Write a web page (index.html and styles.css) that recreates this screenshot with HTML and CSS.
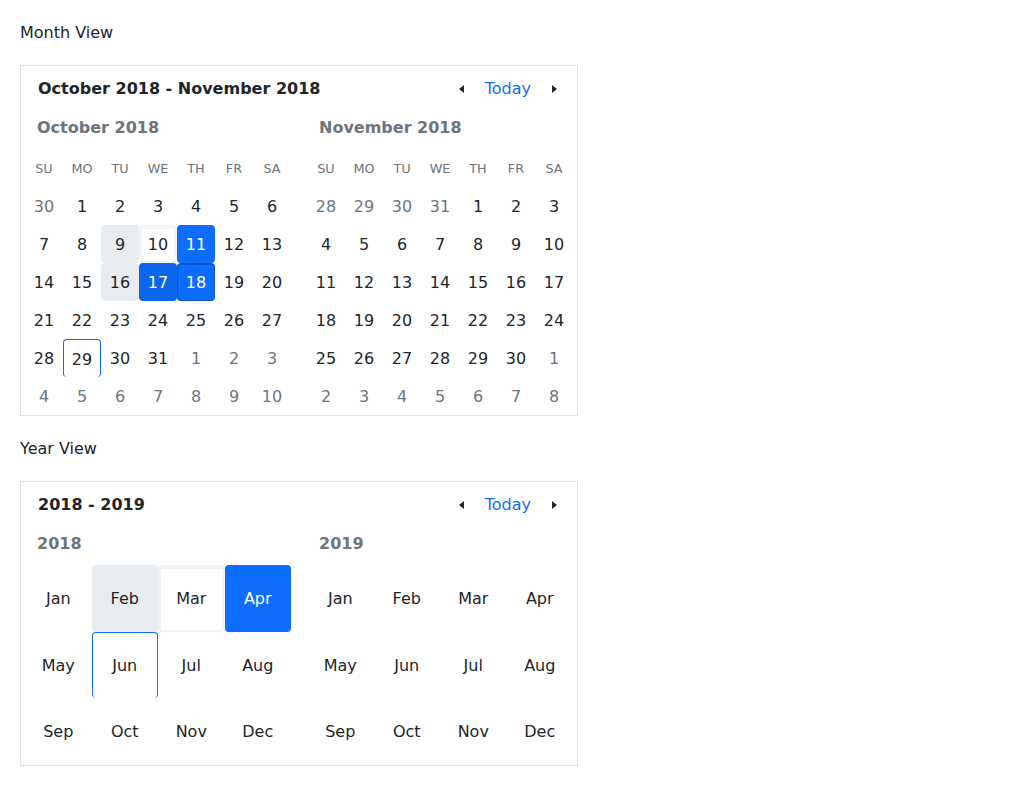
FILE: index.html
```html
<!DOCTYPE html>
<html>
<head>
<meta charset="utf-8">
<link rel="stylesheet" href="styles.css">
</head>
<body>
<div class="label">Month View</div>
<div class="card">
  <div class="head">
    <div class="head-title">October 2018 - November 2018</div>
    <div class="nav">
      <span class="arrow"><span class="tri tri-left"></span></span>
      <span class="today">Today</span>
      <span class="arrow"><span class="tri tri-right"></span></span>
    </div>
  </div>
  <div class="panes">
    <div class="pane">
      <div class="pane-title">October 2018</div>
      <div class="days">
        <span class="wd">SU</span><span class="wd">MO</span><span class="wd">TU</span><span class="wd">WE</span><span class="wd">TH</span><span class="wd">FR</span><span class="wd">SA</span>
        <span class="d muted">30</span><span class="d">1</span><span class="d">2</span><span class="d">3</span><span class="d">4</span><span class="d">5</span><span class="d">6</span>
        <span class="d">7</span><span class="d">8</span><span class="d range">9</span><span class="d ring">10</span><span class="d sel">11</span><span class="d">12</span><span class="d">13</span>
        <span class="d">14</span><span class="d">15</span><span class="d range">16</span><span class="d sel sel-b">17</span><span class="d sel sel-c">18</span><span class="d">19</span><span class="d">20</span>
        <span class="d">21</span><span class="d">22</span><span class="d">23</span><span class="d">24</span><span class="d">25</span><span class="d">26</span><span class="d">27</span>
        <span class="d">28</span><span class="d focus">29</span><span class="d">30</span><span class="d">31</span><span class="d muted">1</span><span class="d muted">2</span><span class="d muted">3</span>
        <span class="d muted">4</span><span class="d muted">5</span><span class="d muted">6</span><span class="d muted">7</span><span class="d muted">8</span><span class="d muted">9</span><span class="d muted">10</span>
      </div>
    </div>
    <div class="pane">
      <div class="pane-title">November 2018</div>
      <div class="days">
        <span class="wd">SU</span><span class="wd">MO</span><span class="wd">TU</span><span class="wd">WE</span><span class="wd">TH</span><span class="wd">FR</span><span class="wd">SA</span>
        <span class="d muted">28</span><span class="d muted">29</span><span class="d muted">30</span><span class="d muted">31</span><span class="d">1</span><span class="d">2</span><span class="d">3</span>
        <span class="d">4</span><span class="d">5</span><span class="d">6</span><span class="d">7</span><span class="d">8</span><span class="d">9</span><span class="d">10</span>
        <span class="d">11</span><span class="d">12</span><span class="d">13</span><span class="d">14</span><span class="d">15</span><span class="d">16</span><span class="d">17</span>
        <span class="d">18</span><span class="d">19</span><span class="d">20</span><span class="d">21</span><span class="d">22</span><span class="d">23</span><span class="d">24</span>
        <span class="d">25</span><span class="d">26</span><span class="d">27</span><span class="d">28</span><span class="d">29</span><span class="d">30</span><span class="d muted">1</span>
        <span class="d muted">2</span><span class="d muted">3</span><span class="d muted">4</span><span class="d muted">5</span><span class="d muted">6</span><span class="d muted">7</span><span class="d muted">8</span>
      </div>
    </div>
  </div>
</div>

<div class="label">Year View</div>
<div class="card">
  <div class="head">
    <div class="head-title">2018 - 2019</div>
    <div class="nav">
      <span class="arrow"><span class="tri tri-left"></span></span>
      <span class="today">Today</span>
      <span class="arrow"><span class="tri tri-right"></span></span>
    </div>
  </div>
  <div class="panes">
    <div class="pane">
      <div class="pane-title">2018</div>
      <div class="months">
        <span class="m">Jan</span><span class="m range">Feb</span><span class="m ring">Mar</span><span class="m sel">Apr</span>
        <span class="m">May</span><span class="m focus">Jun</span><span class="m">Jul</span><span class="m">Aug</span>
        <span class="m">Sep</span><span class="m">Oct</span><span class="m">Nov</span><span class="m">Dec</span>
      </div>
    </div>
    <div class="pane">
      <div class="pane-title">2019</div>
      <div class="months">
        <span class="m">Jan</span><span class="m">Feb</span><span class="m">Mar</span><span class="m">Apr</span>
        <span class="m">May</span><span class="m">Jun</span><span class="m">Jul</span><span class="m">Aug</span>
        <span class="m">Sep</span><span class="m">Oct</span><span class="m">Nov</span><span class="m">Dec</span>
      </div>
    </div>
  </div>
</div>
</body>
</html>
```

FILE: styles.css
```css
* { box-sizing: border-box; }
body {
  margin: 0;
  padding: 0 20px;
  font-family: "DejaVu Sans", sans-serif;
  font-size: 16px;
  line-height: 24px;
  color: #212529;
  background: #fff;
}
.label {
  margin-top: 21px;
  margin-bottom: 20px;
  height: 24px;
}
.card {
  width: 558px;
  border: 1px solid #dee2e6;
  padding: 0 4px;
}
.head {
  height: 44px;
  display: flex;
  align-items: center;
  padding: 2px 7px 0 13px;
}
.head-title {
  flex: 1;
  font-weight: bold;
}
.nav {
  display: flex;
  align-items: center;
}
.arrow {
  width: 24px;
  height: 24px;
  display: flex;
  align-items: center;
  justify-content: center;
}
.tri {
  width: 0;
  height: 0;
  border-top: 4px solid transparent;
  border-bottom: 4px solid transparent;
}
.tri-left { border-right: 5px solid #212529; margin-left: -1px; margin-top: -1px; }
.tri-right { border-left: 5px solid #212529; margin-left: 1px; margin-top: -1px; }
.today {
  color: #0d6efd;
  padding: 0 11px;
}
.panes {
  display: flex;
  gap: 16px;
}
.pane { width: 266px; }
.pane-title {
  color: #6c757d;
  font-weight: bold;
  padding: 6px 0 9px 12px;
  line-height: 24px;
}
.days {
  display: grid;
  grid-template-columns: repeat(7, 38px);
  grid-auto-rows: 38px;
}
.wd, .d {
  display: flex;
  align-items: center;
  justify-content: center;
  border-radius: 4px;
  padding-top: 2px;
}
.wd {
  font-size: 12.8px;
  color: #6c757d;
}
.muted { color: #6c757d; }
.range { background: #e9ecef; }
.ring {
  border: 3px solid #f1f3f5;
  background: #fff;
}
.d.ring { padding-top: 0; border-top-width: 4px; border-bottom-width: 2px; }
.sel { background: #0d6efd; color: #fff; }
.sel-b { background: #0c66ec; }
.sel-c { border: 1px solid #0a58ca; padding-top: 0; border-top-width: 2px; }
.focus {
  border: 1px solid #0d6efd;
  border-bottom: none;
}
.months {
  display: grid;
  grid-template-columns: repeat(4, 66.5px);
}
.m {
  aspect-ratio: 1;
  display: flex;
  align-items: center;
  justify-content: center;
  border-radius: 4px;
  padding-top: 2px;
}
.m.ring { padding-top: 0; border-top-width: 4px; border-bottom-width: 2px; }
```
